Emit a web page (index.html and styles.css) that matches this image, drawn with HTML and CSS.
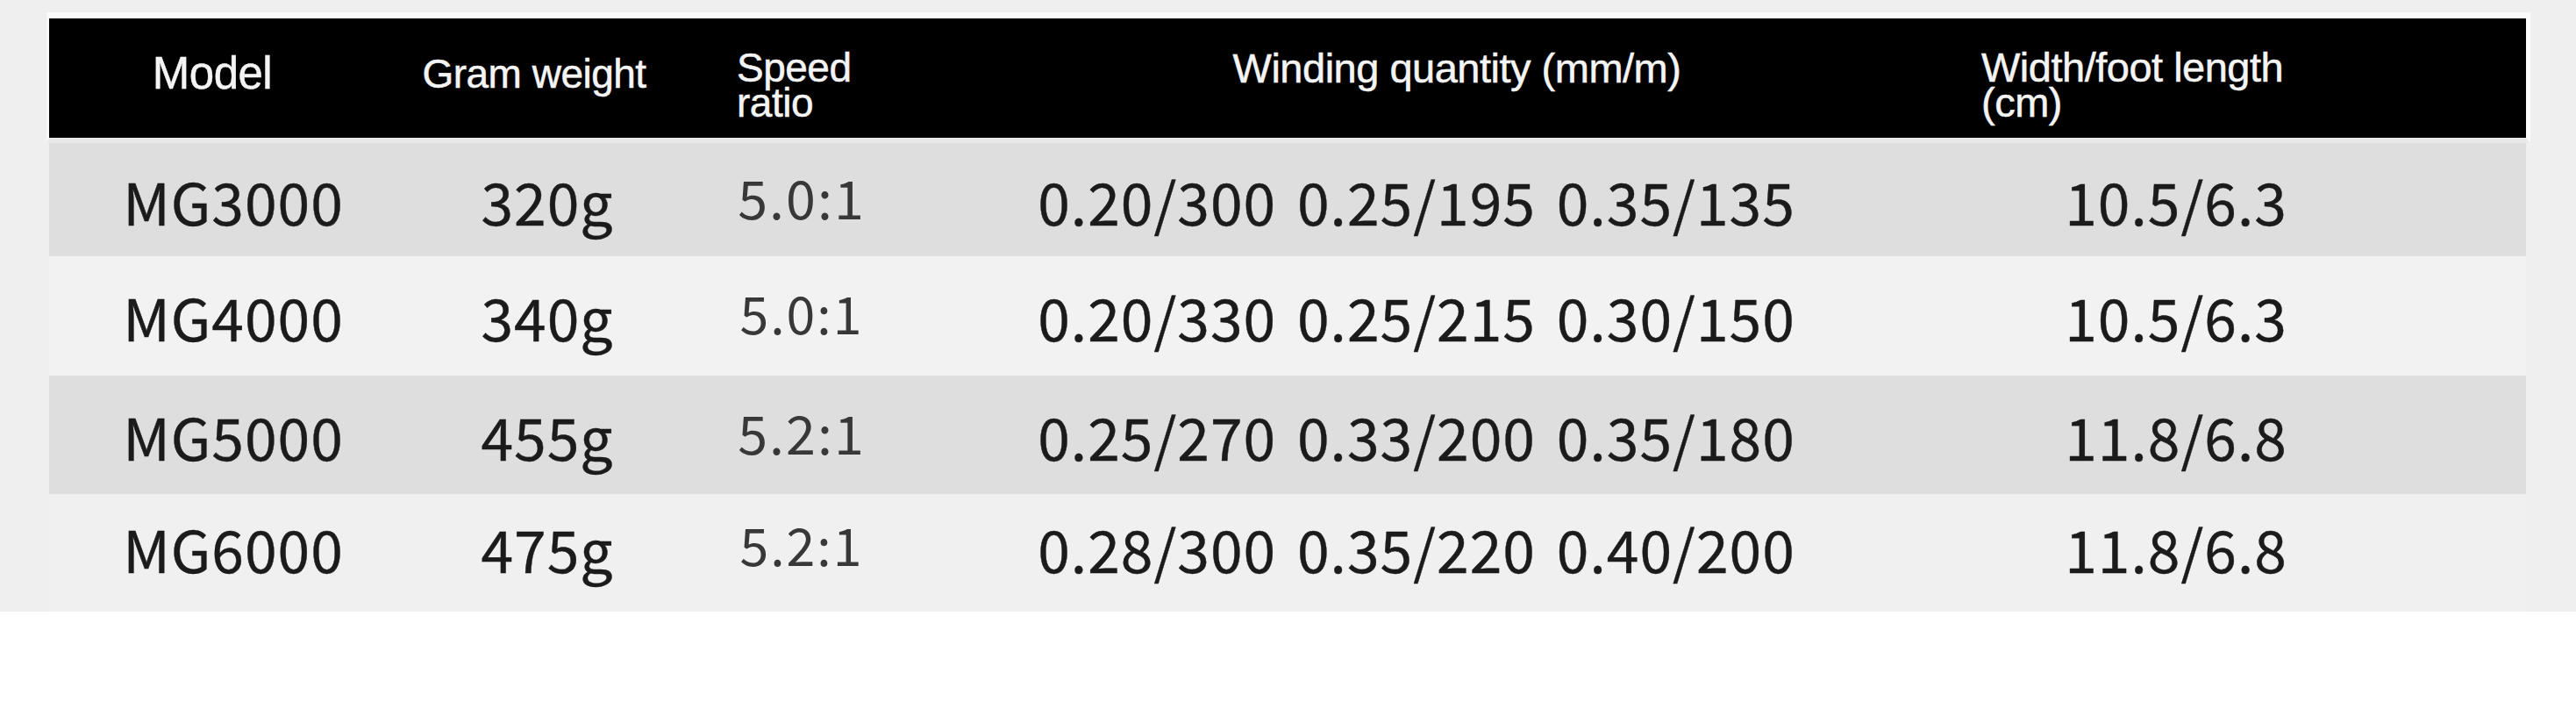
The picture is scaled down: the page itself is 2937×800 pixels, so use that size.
FILE: index.html
```html
<!DOCTYPE html>
<html lang="en">
<head>
<meta charset="utf-8">
<title>Spec table</title>
<link rel="stylesheet" href="styles.css">
</head>
<body>
<div class="sheet">
  <div class="table">
    <div class="thead">
      <div class="th th-model">Model</div>
      <div class="th th-weight">Gram weight</div>
      <div class="th th-speed"><span class="ln">Speed</span><span class="ln">ratio</span></div>
      <div class="th th-wind">Winding quantity (mm/m)</div>
      <div class="th th-width"><span class="ln">Width/foot length</span><span class="ln">(cm)</span></div>
    </div>
    <div class="row row-dark">
      <div class="td">MG3000</div>
      <div class="td">320g</div>
      <div class="td td-speed">5.0:1</div>
      <div class="td td-wind">0.20/300 0.25/195 0.35/135</div>
      <div class="td">10.5/6.3</div>
    </div>
    <div class="row row-light">
      <div class="td">MG4000</div>
      <div class="td">340g</div>
      <div class="td td-speed td-speed-sm">5.0:1</div>
      <div class="td td-wind">0.20/330 0.25/215 0.30/150</div>
      <div class="td">10.5/6.3</div>
    </div>
    <div class="row row-dark">
      <div class="td">MG5000</div>
      <div class="td">455g</div>
      <div class="td td-speed">5.2:1</div>
      <div class="td td-wind">0.25/270 0.33/200 0.35/180</div>
      <div class="td">11.8/6.8</div>
    </div>
    <div class="row row-last">
      <div class="td">MG6000</div>
      <div class="td">475g</div>
      <div class="td td-speed td-speed-sm">5.2:1</div>
      <div class="td td-wind">0.28/300 0.35/220 0.40/200</div>
      <div class="td">11.8/6.8</div>
    </div>
  </div>
</div>
</body>
</html>
```
FILE: styles.css
```css
html, body {
  margin: 0;
  padding: 0;
  background: #ffffff;
}

.sheet {
  background: #efefef;
  height: 697px;
  box-sizing: border-box;
  padding: 14px 52px 0 53px;
}

.table {
  display: flex;
  flex-direction: column;
}

.thead {
  display: grid;
  grid-template-columns: 372px 362px 450px 842px 1fr;
  align-items: start;
  height: 136px;
  background: #000;
  border-top: 7px solid #fbfbfb;
  border-left: 3px solid #f7f7f7;
  border-right: 5px solid #fbfbfb;
  border-bottom: 6px solid #e9e9e9;
  color: #f4f4f4;
  font-family: "Liberation Sans", Arial, sans-serif;
  font-size: 46px;
  line-height: 46px;
  letter-spacing: -0.5px;
  -webkit-text-stroke: 0.5px #f4f4f4;
}

.th-model {
  text-align: center;
  font-size: 51px;
  line-height: 51px;
  margin-top: 37px;
}

.th-weight {
  text-align: center;
  margin-top: 40px;
}

.th-speed {
  display: flex;
  flex-direction: column;
  padding-left: 50px;
  margin-top: 36px;
}

.th-wind {
  text-align: center;
  font-size: 47px;
  line-height: 47px;
  margin-top: 33px;
}

.th-width {
  display: flex;
  flex-direction: column;
  padding-left: 177px;
  font-size: 47px;
  margin-top: 36px;
}

.ln {
  display: block;
  height: 40px;
  line-height: 40px;
}

.row {
  display: grid;
  grid-template-columns: 420px 296px 284px 1118px 614px 1fr;
  align-items: center;
  margin: 0 5px 0 3px;
  font-family: "Noto Sans CJK SC", "Noto Sans", sans-serif;
  font-size: 66px;
  line-height: 1;
  color: #1b1b1b;
  letter-spacing: 1px;
  -webkit-text-stroke: 0.4px #1b1b1b;
}

.row-dark {
  background: #dedede;
}

.row-light {
  background: #f2f2f2;
}

.row:nth-child(2) {
  height: 129px;
}

.row:nth-child(3) {
  height: 136px;
}

.row:nth-child(4) {
  height: 135px;
}

.row-last {
  height: 134px;
  box-sizing: border-box;
  padding-bottom: 12px;
  background: #f0f0f0;
}

.td {
  text-align: center;
  white-space: nowrap;
}

.td-wind {
  word-spacing: 8px;
}

.td-speed {
  font-size: 61px;
  font-weight: 400;
  letter-spacing: 2px;
  color: #383838;
  -webkit-text-stroke: 0;
  margin-bottom: 9px;
}

.td-speed-sm {
  font-size: 59px;
}
```
